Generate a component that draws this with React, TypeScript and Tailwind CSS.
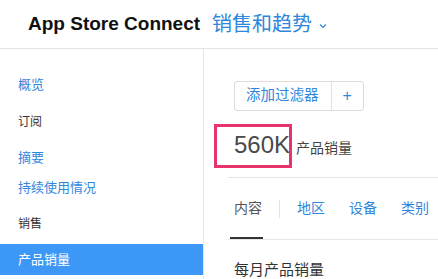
import { FC } from "react";

const cjk = { fontFamily: '"Liberation Sans", "Noto Sans CJK SC", sans-serif' };

const NavItem: FC<{ label: string; kind: "link" | "head" | "active"; h: string }> = ({ label, kind, h }) => {
  const tone =
    kind === "active"
      ? "bg-[#3d97f6] text-white text-[13px]"
      : kind === "head"
      ? "text-[#333] text-[12px]"
      : "text-[#2f86dd] text-[13px]";
  return <div className={`${h} ${tone} flex items-center pl-[18px]`}>{label}</div>;
};

export default function App() {
  return (
    <div className="w-[438px] h-[279px] overflow-hidden bg-white" style={cjk}>
      <header className="h-[49px] border-b border-[#e3e3e3] flex items-center pl-[28px]">
        <span className="text-[19px] font-bold text-[#111]">App Store Connect</span>
        <span className="ml-[12px] text-[20px] text-[#2f86dd]">销售和趋势</span>
        <svg className="ml-[7px] mt-[3px]" width="8" height="6" viewBox="0 0 8 6">
          <path d="M1 1.5 L4 4.5 L7 1.5" fill="none" stroke="#2f86dd" strokeWidth="1.2" />
        </svg>
      </header>
      <div className="flex">
        <aside className="w-[204px] border-r border-[#e6e6e6] pt-[21px] h-[230px]">
          <NavItem label="概览" kind="link" h="h-[30px]" />
          <NavItem label="订阅" kind="head" h="h-[43px]" />
          <NavItem label="摘要" kind="link" h="h-[30px]" />
          <NavItem label="持续使用情况" kind="link" h="h-[30px]" />
          <NavItem label="销售" kind="head" h="h-[41px]" />
          <NavItem label="产品销量" kind="active" h="h-[31px]" />
        </aside>
        <main className="flex-1 pl-[24px] pt-[32px]">
          <div className="ml-[6px] inline-flex h-[30px] border border-[#dcdcdc] rounded-[3px] text-[#2f86dd] text-[14.5px]">
            <span className="flex items-center pl-[11px] pr-[12px] border-r border-[#e0e0e0]">添加过滤器</span>
            <span className="flex items-center px-[11px] text-[16px]">+</span>
          </div>
          <div className="relative ml-[6px] mt-[13px] h-[44px] flex items-center">
            <div className="flex items-baseline">
              <span className="text-[24px] text-[#4a4a4a] leading-none">560K</span>
              <span className="ml-[6px] text-[14px] text-[#444]">产品销量</span>
            </div>
            <div className="absolute left-[-20px] top-0 w-[78px] h-[44px] border-[3px] border-[#e8336c]" />
          </div>
          <div className="mt-[9px] border-t border-[#e6e6e6]" />
          <div className="relative h-[61px] flex items-center pl-[6px] text-[14px]">
            <span className="text-[#555]">内容</span>
            <span className="mx-[17px] w-px h-[18px] bg-[#e3e3e3]" />
            <span className="text-[#2f86dd]">地区</span>
            <span className="ml-[24px] text-[#2f86dd]">设备</span>
            <span className="ml-[24px] text-[#2f86dd]">类别</span>
            <div className="absolute left-[2px] bottom-0 w-[33px] h-[2px] bg-[#333]" />
          </div>
          <div className="border-t border-[#e6e6e6]" />
          <div className="ml-[6px] mt-[20px] text-[15px] text-[#333] leading-[20px]">每月产品销量</div>
        </main>
      </div>
    </div>
  );
}
